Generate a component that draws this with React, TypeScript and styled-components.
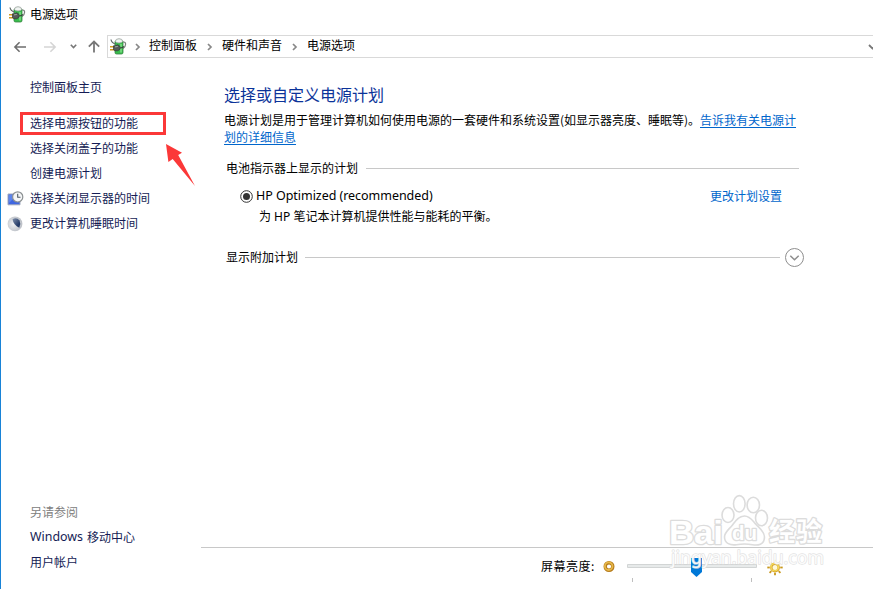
import React from 'react';
import styled, { createGlobalStyle } from 'styled-components';

const Global = createGlobalStyle`
  * { box-sizing: border-box; }
  html, body { margin: 0; padding: 0; background: #fff; overflow: hidden; }
  body { font-family: "Noto Sans", "Noto Sans CJK SC", sans-serif; font-size: 12px; color: #000; }
  svg { display: block; flex: none; }
`;

const Window = styled.div`
  position: relative;
  width: 873px;
  height: 589px;
  display: flex;
  flex-direction: column;
  border-left: 1px solid #1883d7;
  background: #fff;
  overflow: hidden;
`;

const Label = styled.span<{ $w?: number }>`
  display: block;
  flex: none;
  width: ${p => (p.$w ? `${p.$w}px` : 'auto')};
  line-height: 18px;
  white-space: nowrap;
  color: #000;
  font-family: "Noto Sans CJK SC", sans-serif;
`;

const Crumb = styled(Label)`
  padding-bottom: 2px;
`;

const FooterLabel = styled(Label)`
  letter-spacing: 0.5px;
`;

const TitleBar = styled.header`
  display: flex;
  align-items: center;
  height: 29px;
  padding: 0 0 1px 8px;
  gap: 4px;
`;

const NavBar = styled.nav`
  display: flex;
  align-items: flex-start;
  height: 35px;
  padding-top: 6px;
`;

const NavIcons = styled.div`
  display: flex;
  width: 106px;
  height: 23px;
`;

const AddressBar = styled.div`
  display: flex;
  align-items: center;
  flex: 1;
  height: 23px;
  border: 1px solid #d9d9d9;
  border-right: 0;
  padding: 0 0 1px 2px;
`;

const Separator = styled.span<{ $w: number }>`
  display: flex;
  justify-content: center;
  flex: none;
  width: ${p => p.$w}px;
  padding-top: 1px;
`;

const Drop = styled.span`
  margin: 2px -4px 0 auto;
`;

const Body = styled.div`
  display: flex;
  flex: 1;
  min-height: 0;
`;

const Sidebar = styled.aside`
  display: flex;
  flex-direction: column;
  justify-content: space-between;
  width: 200px;
  padding: 11px 0 14px;
`;

const LinkGroup = styled.div`
  display: flex;
  flex-direction: column;
`;

const SideLink = styled.a<{ $gap?: number; $muted?: boolean }>`
  position: relative;
  display: flex;
  align-items: center;
  height: 25px;
  margin-bottom: ${p => p.$gap ?? 0}px;
  line-height: 18px;
  white-space: nowrap;
  color: ${p => (p.$muted ? '#808080' : '#151c55')};
  font-family: "Noto Sans", "Noto Sans CJK SC", sans-serif;
`;

const Latin = styled.span`
  margin-right: 4px;
  padding-bottom: 1px;
  font: 12.4px/18px "Noto Sans", sans-serif;
`;

const IconSlot = styled.span`
  width: 29px;
  height: 16px;
  padding-left: 6px;
`;

const Highlight = styled.span`
  position: absolute;
  left: 19px;
  top: 1px;
  width: 146px;
  height: 23px;
  border: 3px solid #fb3838;
`;

const Pointer = styled.svg`
  position: absolute;
  left: 164px;
  top: 143px;
`;

const Main = styled.main`
  display: flex;
  flex-direction: column;
  flex: 1;
`;

const Content = styled.div`
  flex: 1;
  padding: 18px 0 0 23px;
`;

const Heading = styled.h1`
  margin: 0 0 5px;
  font: 400 16px/24px "Noto Sans CJK SC", sans-serif;
  color: #0b3399;
`;

const Intro = styled.div`
  display: flex;
  height: 17px;
  line-height: 17px;
  white-space: nowrap;
  font-family: "Noto Sans CJK SC", sans-serif;
`;

const IntroText = styled.span`
  width: 476px;
`;

const Link = styled.a<{ $underline?: boolean }>`
  color: #0066cc;
  font-family: "Noto Sans CJK SC", sans-serif;
  line-height: 17px;
  text-decoration: ${p => (p.$underline ? 'underline' : 'none')};
  text-underline-offset: 2px;
`;

const Section = styled.div<{ $top: number; $w: number; $gap: number }>`
  display: flex;
  align-items: center;
  height: 20px;
  width: ${p => p.$w}px;
  margin: ${p => p.$top}px 0 0 2px;
  gap: ${p => p.$gap}px;
`;

const Rule = styled.div<{ $end?: number }>`
  flex: 1;
  height: 1px;
  margin-right: ${p => p.$end ?? 0}px;
  background: #c8c8c8;
`;

const Plan = styled.div`
  display: flex;
  align-items: center;
  width: 558px;
  height: 20px;
  margin-top: 7px;
  padding-left: 16px;
`;

const PlanName = styled.span`
  flex: 1;
  padding: 2px 0 0 3px;
  font: 12.5px/18px "Noto Sans", sans-serif;
  letter-spacing: -0.04px;
  white-space: nowrap;
`;

const Radio = styled.svg`
  margin-top: 2px;
`;

const PlanText = styled.div`
  height: 20px;
  padding-left: 35px;
  margin-top: 2px;
  line-height: 20px;
  white-space: nowrap;
`;

const Footer = styled.footer`
  display: flex;
  height: 42px;
  border-top: 1px solid #c8c8c8;
  padding: 9px 0 0 340px;
`;

const DimIcon = styled.svg`
  margin-left: 8px;
`;

const Slider = styled.svg`
  margin: 0 8px 0 11px;
`;

const Watermark = styled.svg`
  position: absolute;
  left: 659px;
  top: 485px;
  pointer-events: none;
`;

function PowerIcon() {
  return (
    <svg width="17" height="17" viewBox="0 0 17 17">
      <path d="M12 4h1.8q1.8 0 1.8 2.2T13 10.5" fill="none" stroke="#7b807d" strokeWidth="1.2" />
      <rect x="5" y="2.5" width="8" height="13.5" rx="1.5" fill="#38bd4c" stroke="#3a8243" strokeWidth=".8" />
      <path d="M11 6v8.5" stroke="#86e28c" strokeWidth="1.4" />
      <path d="M5.4 3.5q0-2.8 3.6-2.8t3.6 2.8q-1 1.5-3.6 1.5T5.4 3.5z" fill="#f1f4f2" stroke="#98a19c" strokeWidth=".8" />
      <path d="M1 1.5q.6 3.4 4.6 4.8" fill="none" stroke="#5e6866" strokeWidth="1.2" />
      <path d="M0 8.7h4M0 11.8h4" stroke="#d09b22" strokeWidth="1.6" />
      <path d="M3.5 7.8h2.2l1.7-1q2.4.4 3 2.9-.5 2.7-3 3.1l-2.6-.1-1.3-1z" fill="#555957" stroke="#303634" strokeWidth=".7" />
      <path d="M5 8.9l2.8-.4" stroke="#a4aaa6" />
      <path d="M10.4 9.8q2.2.2 3.3-1.5" fill="none" stroke="#3a443d" strokeWidth="1.2" />
    </svg>
  );
}

function Chevron() {
  return (
    <svg width="6" height="8" viewBox="0 0 6 8">
      <path d="M1 1l3 3-3 3" fill="none" stroke="#888" strokeWidth="1.7" />
    </svg>
  );
}

function NavArrows() {
  return (
    <svg width="106" height="23" viewBox="1 35 106 23" fill="none" strokeWidth="1.6">
      <path d="M26 47H15M19.6 42.3L14.9 47l4.7 4.7" stroke="#6e6e6e" />
      <path d="M44 47h11M50.4 42.3l4.7 4.7-4.7 4.7" stroke="#d5d5d5" />
      <path d="M70.8 44.8l2.7 2.7 2.7-2.7" stroke="#777" />
      <path d="M94 52.5V41.5M88.8 46.7L94 41.5l5.2 5.2" stroke="#777" strokeWidth="1.8" />
    </svg>
  );
}

function DisplayIcon() {
  return (
    <svg width="17" height="16" viewBox="0 0 17 16">
      <path d="M1 3h12v10.8H1z" fill="#3f66e0" stroke="#a0a9bd" />
      <path d="M2 12l8-8H2z" fill="#5d84ec" />
      <circle cx="10.7" cy="5.9" r="5.1" fill="#f5f6f7" stroke="#8c9193" strokeWidth="1.2" />
      <path d="M10.7 2.8v3.5h2.8" fill="none" stroke="#4d5966" strokeWidth="1.1" />
    </svg>
  );
}

function SleepIcon() {
  return (
    <svg width="16" height="16" viewBox="0 0 16 16">
      <defs>
        <radialGradient id="moon" cx=".4" cy=".5" r=".6">
          <stop offset="0" stopColor="#f2f4f6" />
          <stop offset="1" stopColor="#b9bdc4" />
        </radialGradient>
        <linearGradient id="shade" x1="0" y1="0" x2="1" y2="1">
          <stop offset="0" stopColor="#8191ab" />
          <stop offset=".7" stopColor="#263c68" />
        </linearGradient>
      </defs>
      <circle cx="8" cy="7.8" r="7.4" fill="url(#moon)" />
      <path d="M5.5 3.2Q9.5 1 12.6 4.4q1.6 3.6-.3 7.4Q6.6 9.3 5.5 3.2z" fill="url(#shade)" />
    </svg>
  );
}

function BaiduMark() {
  return (
    <Watermark width="214" height="104" viewBox="660 485 214 104">
      <g fill="#fff" fillOpacity=".9" stroke="#dcdcdc" strokeWidth="1.6" strokeLinejoin="round">
        <ellipse cx="728" cy="515" rx="6" ry="7.5" />
        <ellipse cx="739.3" cy="503.8" rx="5.8" ry="8.2" />
        <ellipse cx="753.3" cy="505" rx="6.2" ry="7.7" />
        <ellipse cx="761.5" cy="518" rx="6" ry="7.7" />
        <path d="M744.5 516c6 0 8 5 12 9 4 4 8 7 8 12 0 8-7 8.5-12 7.7-5-.8-11-.8-16 0-6 .8-12-1-12-7.7 0-5 5-8 8-12 3-4 6-9 12-9z" />
        <g strokeWidth="2.6" paintOrder="stroke" fillOpacity="1">
          <text x="669" y="543.5" fontFamily="Liberation Sans" fontWeight="700" fontSize="34" textLength="54" lengthAdjust="spacingAndGlyphs">Bai</text>
          <text x="732" y="540" fontFamily="Liberation Sans" fontWeight="700" fontSize="20" textLength="25" lengthAdjust="spacingAndGlyphs">du</text>
          <text x="769" y="541" fontFamily="Noto Sans CJK SC" fontWeight="700" fontSize="26" textLength="53">经验</text>
        </g>
        <text x="671" y="564" fontFamily="Noto Sans" fontSize="18" strokeWidth="1.4" strokeOpacity=".8" paintOrder="stroke" textLength="153" lengthAdjust="spacingAndGlyphs">jingyan.baidu.com</text>
      </g>
    </Watermark>
  );
}

const rays = [0, 45, 90, 135, 180, 225, 270, 315];

export default function App() {
  return (
    <Window>
      <Global />
      <TitleBar>
        <PowerIcon />
        <Label>电源选项</Label>
      </TitleBar>
      <NavBar>
        <NavIcons><NavArrows /></NavIcons>
        <AddressBar>
          <PowerIcon />
          <Separator $w={22}><Chevron /></Separator>
          <Crumb $w={49}>控制面板</Crumb>
          <Separator $w={24}><Chevron /></Separator>
          <Crumb $w={60}>硬件和声音</Crumb>
          <Separator $w={25}><Chevron /></Separator>
          <Crumb $w={49}>电源选项</Crumb>
          <Drop>
            <svg width="9" height="7" viewBox="0 0 9 7"><path d="M1 1l3.5 3.5L8 1" fill="none" stroke="#777" strokeWidth="1.8" /></svg>
          </Drop>
        </AddressBar>
      </NavBar>
      <Body>
        <Sidebar>
          <LinkGroup>
            <SideLink $gap={11}><IconSlot />控制面板主页</SideLink>
            <SideLink><IconSlot />选择电源按钮的功能<Highlight /></SideLink>
            <SideLink><IconSlot />选择关闭盖子的功能</SideLink>
            <SideLink><IconSlot />创建电源计划</SideLink>
            <SideLink><IconSlot><DisplayIcon /></IconSlot>选择关闭显示器的时间</SideLink>
            <SideLink><IconSlot><SleepIcon /></IconSlot>更改计算机睡眠时间</SideLink>
          </LinkGroup>
          <LinkGroup>
            <SideLink $muted><IconSlot />另请参阅</SideLink>
            <SideLink><IconSlot /><Latin>Windows</Latin>移动中心</SideLink>
            <SideLink><IconSlot />用户帐户</SideLink>
          </LinkGroup>
        </Sidebar>
        <Main>
          <Content>
            <Heading>选择或自定义电源计划</Heading>
            <Intro>
              <IntroText>电源计划是用于管理计算机如何使用电源的一套硬件和系统设置(如显示器亮度、睡眠等)。</IntroText>
              <Link $underline>告诉我有关电源计</Link>
            </Intro>
            <Intro><Link $underline>划的详细信息</Link></Intro>
            <Section $top={13} $w={573} $gap={8}>
              <Label>电池指示器上显示的计划</Label>
              <Rule />
            </Section>
            <Plan>
              <Radio width="13" height="14" viewBox="0 0 13 14">
                <circle cx="6.5" cy="7.5" r="5.8" fill="#fff" stroke="#333" />
                <circle cx="6.5" cy="7.5" r="3.5" fill="#333" />
              </Radio>
              <PlanName>HP Optimized (recommended)</PlanName>
              <Link>更改计划设置</Link>
            </Plan>
            <PlanText>为 HP 笔记本计算机提供性能与能耗的平衡。</PlanText>
            <Section $top={20} $w={578} $gap={7}>
              <Label>显示附加计划</Label>
              <Rule $end={-2} />
              <svg width="19" height="20" viewBox="0 0 19 20">
                <circle cx="9.5" cy="10.5" r="9" fill="#fff" stroke="#8e8e8e" />
                <path d="M5.3 8.7l4.2 4.1 4.2-4.1" fill="none" stroke="#8e8e8e" strokeWidth="1.5" />
              </svg>
            </Section>
          </Content>
          <Footer>
            <FooterLabel $w={54}>屏幕亮度:</FooterLabel>
            <DimIcon width="12" height="20" viewBox="602.5 557 12 20">
              <circle cx="608.5" cy="566.5" r="3.8" fill="#fff" stroke="#b77c1c" strokeWidth="3.4" />
              <circle cx="608.2" cy="566.2" r="3.8" fill="none" stroke="#e6b84a" strokeWidth="1.8" />
            </DimIcon>
            <Slider width="132" height="28" viewBox="626 557 132 28">
              <path d="M627.5 564.5h129v3h-129z" fill="#e7eaea" stroke="#d2d5d5" />
              <path d="M691 558h11v14l-5.5 5-5.5-5z" fill="#0078d7" />
              <path d="M632.5 578v4M751.5 578v4" stroke="#bfbfbf" />
            </Slider>
            <svg width="18" height="22" viewBox="766 557 18 22">
              {rays.map(a => (
                <path key={a} d="M775 562.3v-2.5" stroke="#c9981c" strokeWidth="1.8" transform={`rotate(${a} 775 567.5)`} />
              ))}
              <circle cx="775" cy="567.5" r="3.7" fill="#fff9d8" stroke="#d3a12b" strokeWidth="2.4" />
              <circle cx="774.7" cy="567.2" r="3.7" fill="none" stroke="#f6da58" strokeWidth="1.4" />
            </svg>
          </Footer>
        </Main>
      </Body>
      <Pointer width="34" height="46" viewBox="165 143 34 46">
        <path d="M166 144l16 8.8-3.8 2.3 16.8 31-22.3-27-4.3 2.8z" fill="#fb3838" />
      </Pointer>
      <BaiduMark />
    </Window>
  );
}
